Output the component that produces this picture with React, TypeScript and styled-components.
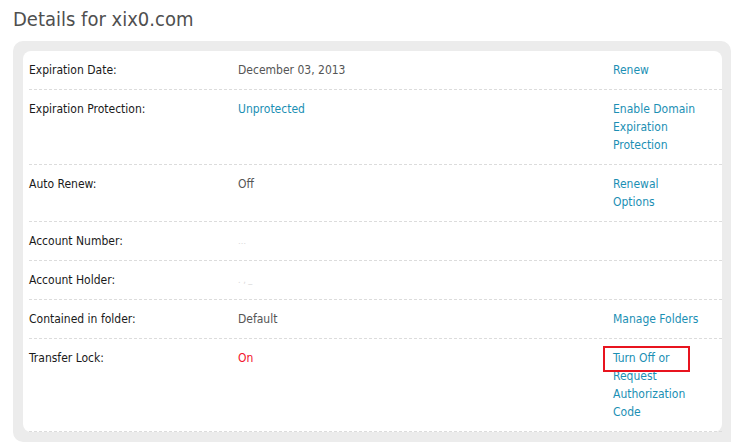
import styled, { createGlobalStyle } from 'styled-components';

const GlobalStyle = createGlobalStyle`
    body {
        margin: 0;
        background: #ffffff;
        font-family: "DejaVu Sans Condensed", "DejaVu Sans", "Liberation Sans", sans-serif;
    }
`;

interface Detail {
    label: string;
    value?: string;
    tone?: 'plain' | 'link' | 'alert' | 'hidden';
    action?: string;
    marked?: string;
}

const details: Detail[] = [
    { label: 'Expiration Date:', value: 'December 03, 2013', action: 'Renew' },
    { label: 'Expiration Protection:', value: 'Unprotected', tone: 'link', action: 'Enable Domain Expiration Protection' },
    { label: 'Auto Renew:', value: 'Off', action: 'Renewal Options' },
    { label: 'Account Number:', value: '…', tone: 'hidden' },
    { label: 'Account Holder:', value: '. ‚ _', tone: 'hidden' },
    { label: 'Contained in folder:', value: 'Default', action: 'Manage Folders' },
    { label: 'Transfer Lock:', value: 'On', tone: 'alert', marked: 'Turn Off or', action: 'Request Authorization Code' },
];

const Page = styled.div`
    padding: 8px 0 0 13px;
`;

const Title = styled.h2`
    margin: 0 0 10px;
    font-size: 20px;
    line-height: 23px;
    font-weight: normal;
    color: #4f4f4f;
`;

const Frame = styled.div`
    background: #ececec;
    border-radius: 10px 10px 0 10px;
    padding: 10px 9px 10px 10px;
`;

const Card = styled.div`
    background: #ffffff;
    border-radius: 8px;
    padding: 0 0 0 6px;
`;

const Row = styled.div`
    display: grid;
    grid-template-columns: 209px 375px 88px;
    padding: 10px 0;
    border-bottom: 1px dashed #dcdcdc;
    font-size: 12px;
    line-height: 18px;
`;

const Label = styled.div`
    color: #1a1a1a;
`;

const Value = styled.div<{ $tone: Detail['tone'] }>`
    color: ${({ $tone }) =>
        $tone === 'link' ? '#1b8fb4' : $tone === 'alert' ? '#f2132d' : $tone === 'hidden' ? '#d9d9d9' : '#555555'};
    font-size: ${({ $tone }) => ($tone === 'hidden' ? '9px' : '12px')};
`;

const Action = styled.a`
    color: #1b8fb4;
    text-decoration: none;
`;

const Marked = styled.span`
    position: relative;

    &::after {
        content: '';
        position: absolute;
        left: -10px;
        top: -5px;
        width: 87px;
        height: 26px;
        box-sizing: border-box;
        border: 2px solid #e8141f;
        pointer-events: none;
    }
`;

export default function App() {
    return (
        <Page>
            <GlobalStyle />
            <Title>Details for xix0.com</Title>
            <Frame>
                <Card>
                    {details.map((d) => (
                        <Row key={d.label}>
                            <Label>{d.label}</Label>
                            <Value $tone={d.tone}>{d.value}</Value>
                            <div>
                                {d.marked && (
                                    <>
                                        <Action href="#"><Marked>{d.marked}</Marked></Action>{' '}
                                    </>
                                )}
                                {d.action && <Action href="#">{d.action}</Action>}
                            </div>
                        </Row>
                    ))}
                </Card>
            </Frame>
        </Page>
    );
}
